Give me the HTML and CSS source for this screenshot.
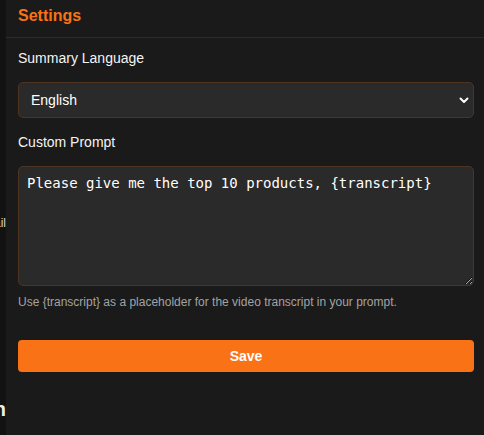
FILE: index.html
```html
<!DOCTYPE html>
<html lang="en">
<head>
<meta charset="utf-8">
<title>Settings</title>
<link rel="stylesheet" href="styles.css">
</head>
<body>
<div class="app">
  <div class="backdrop">
    <span class="peek peek-a">Detail</span>
    <span class="peek peek-b">Caption</span>
  </div>
  <section class="panel">
    <header class="panel-header">
      <h2 class="panel-title">Settings</h2>
    </header>
    <div class="panel-body">
      <label class="field-label" for="lang">Summary Language</label>
      <div class="select-wrap">
        <select id="lang" class="select">
          <option>English</option>
        </select>
        <svg class="chevron" width="10" height="7" viewBox="0 0 10 7" aria-hidden="true">
          <path d="M1.5 1.5 L5 5 L8.5 1.5" fill="none" stroke="#ffffff" stroke-width="1.9" stroke-linecap="round" stroke-linejoin="round"/>
        </svg>
      </div>
      <label class="field-label" for="prompt">Custom Prompt</label>
      <textarea id="prompt" class="textarea">Please give me the top 10 products, {transcript}</textarea>
      <p class="hint">Use {transcript} as a placeholder for the video transcript in your prompt.</p>
      <button class="save-btn" type="button">Save</button>
    </div>
  </section>
</div>
</body>
</html>
```

FILE: styles.css
```css
* { box-sizing: border-box; }

html, body {
  margin: 0;
  padding: 0;
  height: 100%;
  background: #121212;
}

body {
  font-family: "Liberation Sans", Arial, sans-serif;
  color: #f2f2f2;
}

.app {
  display: flex;
  height: 435px;
  overflow: hidden;
}

.backdrop {
  width: 6px;
  flex: 0 0 6px;
  background: #121212;
  display: flex;
  flex-direction: column;
  align-items: flex-end;
  overflow: hidden;
}

.peek {
  white-space: nowrap;
  color: #d6d6d6;
}

.peek-a {
  font-size: 12px;
  line-height: 16px;
  margin-top: 215px;
}

.peek-b {
  font-size: 20px;
  line-height: 24px;
  font-weight: 700;
  color: #ececec;
  margin-top: 166px;
}

.panel {
  flex: 1;
  background: #1a1a1a;
  display: flex;
  flex-direction: column;
}

.panel-header {
  height: 38px;
  border-bottom: 1px solid #3a2818;
  padding: 6px 12px 0;
}

.panel-title {
  margin: 0;
  font-size: 16px;
  line-height: 20px;
  font-weight: 700;
  color: #f97316;
}

.panel-body {
  padding: 10px 10px 0 12px;
  display: flex;
  flex-direction: column;
}

.field-label {
  display: block;
  font-size: 14px;
  line-height: 20px;
  color: #f4f4f4;
  margin-bottom: 14px;
}

.select-wrap {
  position: relative;
  margin-bottom: 14px;
}

.select {
  display: block;
  width: 100%;
  height: 36px;
  appearance: none;
  -webkit-appearance: none;
  background: #2a2a2a;
  border: 1px solid #4d3422;
  border-radius: 5px;
  color: #ffffff;
  font-family: "Liberation Sans", Arial, sans-serif;
  font-size: 14px;
  padding: 0 30px 0 12px;
  outline: none;
}

.chevron {
  position: absolute;
  right: 5px;
  top: 15px;
}

.textarea {
  display: block;
  width: 100%;
  height: 120px;
  background: #2a2a2a;
  border: 1px solid #4d3422;
  border-radius: 5px;
  color: #ffffff;
  font-family: "DejaVu Sans Mono", "Liberation Mono", monospace;
  font-size: 14px;
  line-height: 17px;
  padding: 8px 8px;
  resize: vertical;
  outline: none;
}

.hint {
  margin: 8px 0 0;
  font-size: 12px;
  line-height: 16px;
  color: #a3a3a3;
}

.save-btn {
  margin-top: 30px;
  height: 32px;
  width: 100%;
  background: #f97316;
  border: none;
  border-radius: 4px;
  color: #ffffff;
  font-family: "Liberation Sans", Arial, sans-serif;
  font-size: 14px;
  font-weight: 700;
  cursor: pointer;
}
```
